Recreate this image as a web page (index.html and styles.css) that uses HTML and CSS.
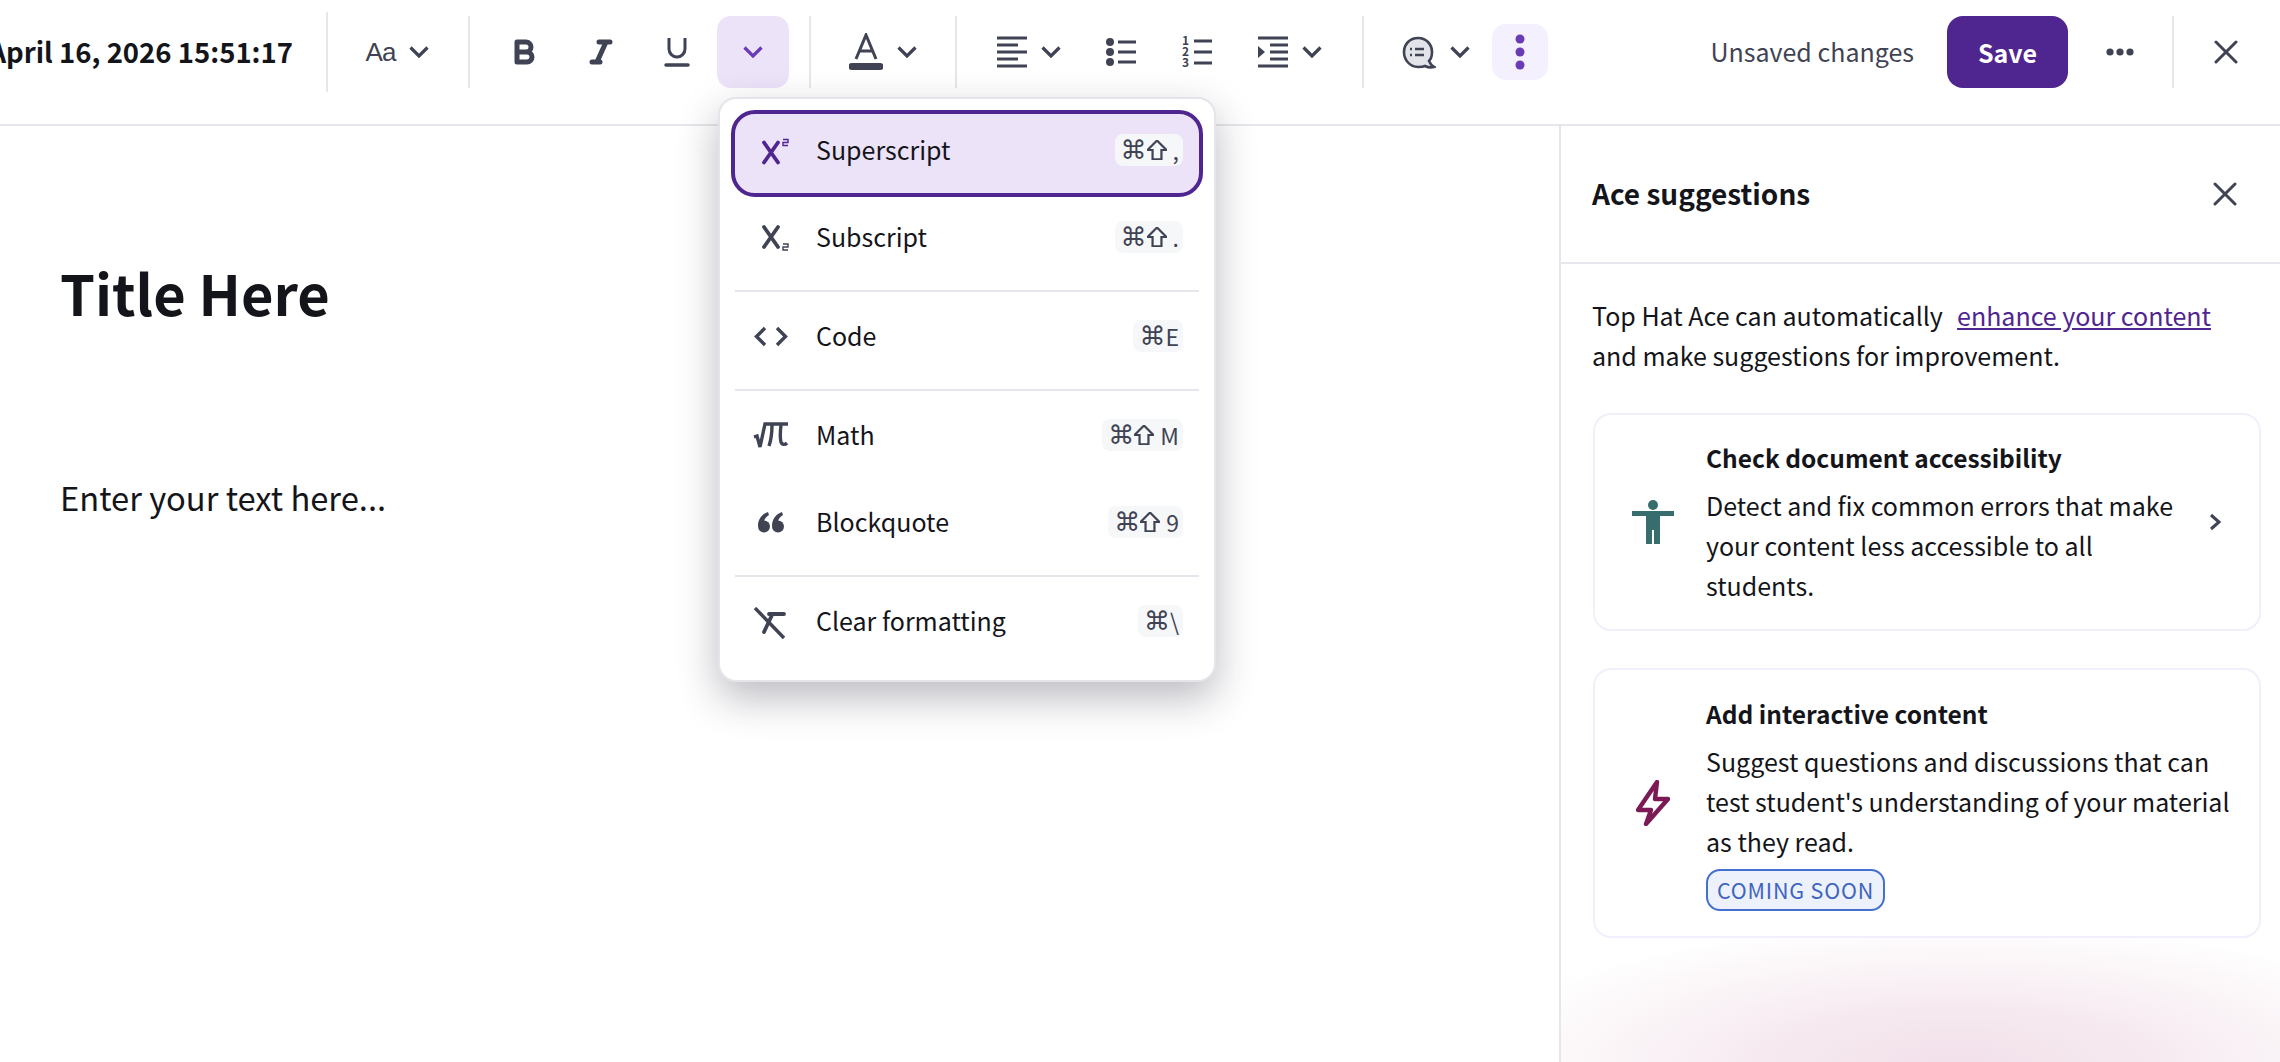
FILE: index.html
```html
<!DOCTYPE html>
<html lang="en">
<head>
  <meta charset="UTF-8" />
  <title>Editor</title>
  <link rel="stylesheet" href="styles.css">
</head>
<body>
  <div class="app">
    <header class="toolbar">
      <div class="doc-title"><span>April 16, 2026 15:51:17</span></div>
      <span class="sep sep-tall"></span>
      <button class="tool wide tool-aa"><span class="aa">Aa</span><svg class="chev" viewBox="0 0 20 12"><path d="M1.5 1.5l8.5 8.5 8.5-8.5"/></svg></button>
      <span class="sep"></span>
      <div class="tools">
        <button class="tool"><svg class="ico" width="22" height="26" viewBox="0 0 22 26"><path class="thick" d="M3 13V3h9a5 5 0 0 1 0 10H3v10h10a5 5 0 0 0 0-10"/></svg></button>
        <button class="tool"><svg class="ico" width="24" height="26" viewBox="0 0 24 26"><path class="thick" d="M10 3h11M17 3L8 23M3 23h8"/></svg></button>
        <button class="tool"><svg class="ico" width="26" height="32" viewBox="0 0 26 32"><path d="M5 2v11a8 8 0 0 0 16 0V2"/><path class="bar" d="M2 29h22"/></svg></button>
        <button class="tool tool-on"><svg class="chev chev-on" viewBox="0 0 20 12"><path d="M1.5 1.5l8.5 8.5 8.5-8.5"/></svg></button>
      </div>
      <span class="sep"></span>
      <button class="tool wide"><svg class="ico" width="34" height="38" viewBox="0 0 34 38"><path d="M7 26L17 2l10 24M10.500 18h13"/><path class="bar-heavy" d="M3 33.500h28"/></svg><svg class="chev" viewBox="0 0 20 12"><path d="M1.5 1.5l8.5 8.5 8.5-8.5"/></svg></button>
      <span class="sep"></span>
      <div class="tools">
        <button class="tool wide"><svg class="ico" width="30" height="32" viewBox="0 0 30 32"><path d="M0 2h30M0 9h21M0 16h30M0 23h21M0 30h30"/></svg><svg class="chev" viewBox="0 0 20 12"><path d="M1.5 1.5l8.5 8.5 8.5-8.5"/></svg></button>
        <button class="tool"><svg class="ico" width="30" height="32" viewBox="0 0 30 32"><circle class="solid" cx="4" cy="6" r="4"/><circle class="solid" cx="4" cy="16" r="4"/><circle class="solid" cx="4" cy="26" r="4"/><path d="M12 6h18M12 16h18M12 26h18"/></svg></button>
        <button class="tool"><svg class="ico" width="32" height="34" viewBox="0 0 32 34"><text class="num"><tspan x="1" y="10">1</tspan><tspan x="1" y="21">2</tspan><tspan x="1" y="32">3</tspan></text><path d="M13 6h18M13 17h18M13 28h18"/></svg></button>
        <button class="tool wide"><svg class="ico" width="30" height="32" viewBox="0 0 30 32"><path d="M0 2h30M12 9h18M12 16h18M12 23h18M0 30h30"/><path class="solid" d="M0 10l7 6-7 6z"/></svg><svg class="chev" viewBox="0 0 20 12"><path d="M1.5 1.5l8.5 8.5 8.5-8.5"/></svg></button>
      </div>
      <span class="sep"></span>
      <div class="tools">
        <button class="tool wide"><svg class="ico" width="34" height="33" viewBox="0 0 34 33"><path class="bubble" d="M16 2c8 0 14 6 14 14 0 4-1 7-3 9 1 2 3 5 5 6-4 1-7 0-9-1-2 1-5 1-7 1C8 31 2 24 2 16S8 2 16 2z"/><path class="thin" d="M13 13h9M13 19h9M8 13h2M8 19h2"/></svg><svg class="chev" viewBox="0 0 20 12"><path d="M1.5 1.5l8.5 8.5 8.5-8.5"/></svg></button>
        <button class="tool tool-kebab"><svg width="10" height="36" viewBox="0 0 10 36"><circle cx="5" cy="5" r="4.5"/><circle cx="5" cy="18" r="4.5"/><circle cx="5" cy="31" r="4.5"/></svg></button>
      </div>
      <span class="unsaved">Unsaved changes</span>
      <button class="save">Save</button>
      <button class="tool"><svg width="28" height="8" viewBox="0 0 28 8"><circle class="solid" cx="4" cy="4" r="3.6"/><circle class="solid" cx="14" cy="4" r="3.6"/><circle class="solid" cx="24" cy="4" r="3.6"/></svg></button>
      <span class="sep sep-end"></span>
      <button class="tool"><svg class="ico" width="24" height="24" viewBox="0 0 24 24"><path class="x" d="M2 2l20 20M22 2L2 22"/></svg></button>
    </header>

    <div class="workspace">
      <main class="editor">
        <h1>Title Here</h1>
        <p>Enter your text here...</p>
      </main>

      <aside class="panel">
        <div class="panel-head">
          <h2>Ace suggestions</h2>
          <svg class="ico" width="24" height="24" viewBox="0 0 24 24"><path class="x" d="M2 2l20 20M22 2L2 22"/></svg>
        </div>
        <div class="panel-body">
          <p class="intro">Top Hat Ace can automatically &nbsp;<a href="#">enhance your content</a> and make suggestions for improvement.</p>

          <div class="card">
            <div class="card-icon">
              <svg width="42" height="46" viewBox="0 0 42 46"><circle class="teal" cx="21" cy="6" r="5"/><path class="teal" d="M0 12h42v5H28v28h-6V31h-2v14h-6V17H0z"/></svg>
            </div>
            <div class="card-text">
              <h3>Check document accessibility</h3>
              <p>Detect and fix common errors that make your content less accessible to all students.</p>
            </div>
            <svg class="ico card-arrow" width="12" height="18" viewBox="0 0 12 18"><path d="M2 2l8 7-8 7"/></svg>
          </div>

          <div class="card card-soon">
            <div class="card-icon">
              <svg width="34" height="46" viewBox="0 0 34 46"><path class="bolt" d="M21 2L2 30h13l-5 14 22-25H19z"/></svg>
            </div>
            <div class="card-text">
              <h3>Add interactive content</h3>
              <p>Suggest questions and discussions that can test student's understanding of your material as they read.</p>
              <span class="badge">COMING SOON</span>
            </div>
          </div>
        </div>
      </aside>
    </div>

    <div class="menu">
      <div class="item item-active">
        <svg class="mi" viewBox="0 0 36 36"><path class="mi-x" d="M11 6.5l14 20M25 6.500l-14 20"/><path class="mi-two" d="M30 3.5h5v3h-5v3h5"/></svg>
        <span class="label">Superscript</span>
        <span class="kbd"><span class="sym">⌘</span><svg class="shift" viewBox="1 1 18 18"><path d="M10 1.5L18.5 10h-4.5v8.500H6V10H1.5z"/></svg><span>,</span></span>
      </div>
      <div class="item">
        <svg class="mi" viewBox="0 0 36 36"><path class="mi-x" d="M11 4l14 20M25 4L11 24"/><path class="mi-two" d="M30 21h5v3h-5v3h5"/></svg>
        <span class="label">Subscript</span>
        <span class="kbd"><span class="sym">⌘</span><svg class="shift" viewBox="1 1 18 18"><path d="M10 1.5L18.5 10h-4.5v8.500H6V10H1.5z"/></svg><span>.</span></span>
      </div>
      <div class="divider"></div>
      <div class="item">
        <svg class="mi" viewBox="0 0 36 36"><path d="M12 6l-8.500 8.500L12 23M24 6l8.500 8.500L24 23"/></svg>
        <span class="label">Code</span>
        <span class="kbd"><span class="sym">⌘</span><span>E</span></span>
      </div>
      <div class="divider"></div>
      <div class="item">
        <svg class="mi" viewBox="0 0 36 36"><path d="M1 16l3-1 3 11 5-23h23"/><path d="M19 4c0 9-1 15-3 21M28 4c-1 8-1 13 0 17 1 3 4 3 6 1"/></svg>
        <span class="label">Math</span>
        <span class="kbd"><span class="sym">⌘</span><svg class="shift" viewBox="1 1 18 18"><path d="M10 1.5L18.5 10h-4.5v8.500H6V10H1.5z"/></svg><span>M</span></span>
      </div>
      <div class="item">
        <svg class="mi" viewBox="0 0 36 36"><g class="solid"><circle cx="11" cy="18.5" r="6"/><path d="M5 18C5 11 9 6 15 4l1 3c-3 2-5 4-5 7z"/><circle cx="25" cy="18.5" r="6"/><path d="M19 18c0-7 4-12 10-14l1 3c-3 2-5 4-5 7z"/></g></svg>
        <span class="label">Blockquote</span>
        <span class="kbd"><span class="sym">⌘</span><svg class="shift" viewBox="1 1 18 18"><path d="M10 1.5L18.5 10h-4.5v8.500H6V10H1.5z"/></svg><span>9</span></span>
      </div>
      <div class="divider"></div>
      <div class="item">
        <svg class="mi" viewBox="0 0 36 36"><path d="M2 1l29 30"/><path class="mi-x" d="M16 7h15M19 8l-8 17"/></svg>
        <span class="label">Clear formatting</span>
        <span class="kbd"><span class="sym">⌘</span><span>\</span></span>
      </div>
    </div>
  </div>
</body>
</html>
```

FILE: styles.css
```css
* {
  box-sizing: border-box;
}
html, body {
  height: 100%;
}
body {
  margin: 0;
  background: white;
  color: #14151a;
  font-family: "Noto Sans CJK SC", "Noto Sans", sans-serif;
  font-size: 25px;
  overflow: hidden;
}
h1, h2, h3, p {
  margin: 0;
}
button {
  border: none;
  background: none;
  padding: 0;
  font: inherit;
}
.app {
  position: relative;
  display: flex;
  flex-direction: column;
  height: 1062px;
}

/* top bar */
.toolbar {
  display: flex;
  align-items: center;
  height: 126px;
  padding: 16px 18px 36px 0;
  border-bottom: 2px solid #e6e6ec;
}
.doc-title {
  display: flex;
  justify-content: flex-end;
  width: 326px;
  padding: 0 33px 2px 0;
  overflow: hidden;
  font-weight: 700;
  font-size: 27.5px;
  line-height: 40px;
  white-space: nowrap;
}
.sep {
  flex: none;
  width: 2px;
  height: 72px;
  margin: 0 19px 0 20px;
  background: #e6e6ec;
}
.sep-tall {
  height: 80px;
  margin-left: 0;
}
.sep-end {
  margin: 0 16px;
}
.tools {
  display: flex;
  align-items: center;
  gap: 4px;
}
.tool {
  flex: none;
  display: flex;
  align-items: center;
  justify-content: center;
  width: 72px;
  height: 72px;
  border-radius: 14px;
}
.tool.wide {
  width: 105px;
  gap: 14px;
}
.tool-aa.wide {
  width: 101px;
}
.tool-on {
  background: #ece3f9;
}
.tool-kebab {
  width: 56px;
  height: 56px;
  background: #f5f0fd;
}
.tool-kebab circle {
  fill: #6b3ab5;
}
.aa {
  font-family: "Liberation Sans", sans-serif;
  font-size: 26px;
  color: #3f4354;
  letter-spacing: -1px;
}
.chev {
  width: 20px;
  height: 12px;
  fill: none;
  stroke: #3f4354;
  stroke-width: 3.2;
}
.chev-on {
  stroke: #6b3ab5;
}
.ico {
  fill: none;
  stroke: #3f4354;
  stroke-width: 3;
}
.ico .thick {
  stroke-width: 5;
  stroke-linejoin: round;
  stroke-linecap: round;
}
.ico .bar {
  stroke-width: 3.5;
  stroke-linecap: round;
}
.ico .bar-heavy {
  stroke-width: 7;
  stroke-linecap: round;
}
.ico .x {
  stroke-width: 3;
  stroke-linecap: round;
}
.solid {
  fill: #3f4354;
  stroke: none;
}
.num {
  fill: #3f4354;
  stroke: none;
  font-size: 12px;
  font-weight: 700;
}
.bubble {
  fill: #e2e4e9;
  stroke-width: 2.6;
}
.ico .thin {
  stroke-width: 2.4;
}
.unsaved {
  margin-left: auto;
  margin-right: 33px;
  padding-bottom: 2px;
  color: #3f4354;
}
.save {
  flex: none;
  width: 121px;
  height: 72px;
  margin-right: 16px;
  border-radius: 16px;
  background: #4f2590;
  color: white;
  font-weight: 700;
}

/* page + side panel */
.workspace {
  flex: 1;
  display: flex;
  min-height: 0;
}
.editor {
  flex: 1;
  padding: 122px 60px 0;
}
.editor h1 {
  font-size: 56px;
  line-height: 88px;
  font-weight: 700;
  margin-bottom: 137px;
}
.editor p {
  font-size: 32.7px;
  line-height: 48px;
}
.panel {
  flex: none;
  width: 721px;
  border-left: 2px solid #e6e6ec;
  background: radial-gradient(ellipse 490px 140px at 55% 100%, #f2e0ea, #f6eaf0 40%, rgba(246, 234, 240, 0));
}
.panel-head {
  display: flex;
  align-items: center;
  justify-content: space-between;
  height: 138px;
  padding: 0 43px 0 31px;
  border-bottom: 2px solid #e6e6ec;
}
.panel-head h2 {
  padding-bottom: 2px;
  font-size: 28px;
  font-weight: 700;
}
.panel-body {
  padding: 31px 19px 0 32px;
}
.intro {
  line-height: 40px;
  margin: 0 30px 38px -1px;
}
.intro a {
  margin-left: 3px;
  color: #4f2590;
}
.card {
  display: flex;
  align-items: center;
  gap: 9px;
  padding: 23px 0 24px 14px;
  margin-bottom: 37px;
  background: white;
  border: 2px solid #f3eefb;
  border-radius: 18px;
}
.card-soon {
  padding: 24px 0 25px 14px;
}
.card-soon .card-text {
  padding-right: 15px;
}
.card-icon {
  flex: none;
  display: flex;
  justify-content: center;
  width: 88px;
}
.card-text {
  flex: 1;
  line-height: 40px;
}
.card-text h3 {
  font-size: 24.5px;
  font-weight: 700;
  margin-bottom: 7px;
}
.card-arrow {
  flex: none;
  margin: 0 38px 0 20px;
}
.teal {
  fill: #376d6d;
}
.bolt {
  fill: none;
  stroke: #7c1a55;
  stroke-width: 4.4;
  stroke-linejoin: round;
}
.badge {
  display: inline-block;
  height: 42px;
  margin-top: 8px;
  padding: 0 9px;
  border: 2px solid #4470d0;
  border-radius: 14px;
  background: #edf1fb;
  color: #3d65c0;
  font-size: 21.5px;
  line-height: 38px;
  letter-spacing: 0.8px;
  vertical-align: top;
}

/* format dropdown */
.menu {
  position: absolute;
  top: 97px;
  left: 718px;
  width: 498px;
  padding: 11px 11px 12px;
  background: white;
  border: 2px solid #e4e4ea;
  border-radius: 18px;
  box-shadow: 0 16px 40px rgba(30, 30, 50, 0.3);
}
.item {
  display: flex;
  align-items: center;
  height: 87px;
  padding: 0 16px 0 18px;
  border: 4px solid transparent;
  border-radius: 24px;
}
.item-active {
  background: #ece3f9;
  border-color: #4f2590;
}
.label {
  flex: 1;
  margin-left: 27px;
  padding-bottom: 10px;
}
.mi {
  flex: none;
  width: 36px;
  height: 36px;
  fill: none;
  stroke: #3f4354;
  stroke-width: 3.4;
}
.mi-x {
  stroke-width: 3.8;
  stroke-linecap: round;
}
.mi-two {
  stroke-width: 1.4;
}
.item-active .mi {
  stroke: #4f2590;
}
.kbd {
  display: flex;
  align-items: center;
  gap: 6px;
  height: 32px;
  padding: 0 4px 0 6px;
  border-radius: 8px;
  background: #f6f7f9;
  color: #3f4354;
  font-size: 23px;
  line-height: 32px;
  margin-bottom: 7px;
}
.sym {
  width: 20px;
  font-family: "DejaVu Sans", sans-serif;
  font-size: 26px;
  text-align: center;
}
.shift {
  width: 20px;
  height: 20px;
  fill: none;
  stroke: #3f4354;
  stroke-width: 2;
}
.divider {
  height: 2px;
  margin: 6px 4px 4px;
  background: #e6e6ec;
}
```
